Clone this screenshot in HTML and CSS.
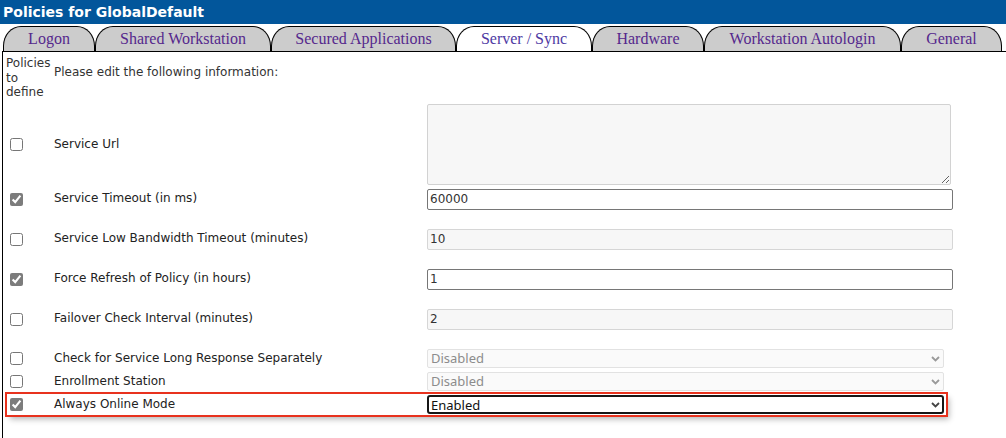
FILE: index.html
```html
<!DOCTYPE html>
<html lang="en">
<head>
<meta charset="utf-8">
<title>Policies for GlobalDefault</title>
<link rel="stylesheet" href="styles.css">
</head>
<body>
<div class="titlebar">Policies for GlobalDefault</div>
<div class="tabs">
  <div class="tab w-logon">Logon</div>
  <div class="tab w-shared">Shared Workstation</div>
  <div class="tab w-secured">Secured Applications</div>
  <div class="tab w-server active">Server / Sync</div>
  <div class="tab w-hardware">Hardware</div>
  <div class="tab w-auto">Workstation Autologin</div>
  <div class="tab w-general">General</div>
</div>
<div class="panel">
  <div class="intro">
    <div class="intro-col">Policies to define</div>
    <div class="intro-text">Please edit the following information:</div>
  </div>

  <div class="row row-area">
    <div class="chk"><input type="checkbox"></div>
    <label class="lbl">Service Url</label>
    <textarea class="area" readonly></textarea>
  </div>

  <div class="row row-input first-input">
    <div class="chk"><input type="checkbox" checked></div>
    <label class="lbl">Service Timeout (in ms)</label>
    <input class="inp" type="text" value="60000">
  </div>

  <div class="row row-input">
    <div class="chk"><input type="checkbox"></div>
    <label class="lbl">Service Low Bandwidth Timeout (minutes)</label>
    <input class="inp off" type="text" value="10" readonly>
  </div>

  <div class="row row-input">
    <div class="chk"><input type="checkbox" checked></div>
    <label class="lbl">Force Refresh of Policy (in hours)</label>
    <input class="inp" type="text" value="1">
  </div>

  <div class="row row-input">
    <div class="chk"><input type="checkbox"></div>
    <label class="lbl">Failover Check Interval (minutes)</label>
    <input class="inp off" type="text" value="2" readonly>
  </div>

  <div class="row row-select first-select">
    <div class="chk"><input type="checkbox"></div>
    <label class="lbl">Check for Service Long Response Separately</label>
    <div class="sel">
      <select class="off" disabled><option>Disabled</option></select>
      <svg class="chev" width="9" height="6" viewBox="0 0 9 6"><path d="M1 1 L4.5 4.5 L8 1" fill="none" stroke="#9a9a9a" stroke-width="1.8"/></svg>
    </div>
  </div>

  <div class="row row-select">
    <div class="chk"><input type="checkbox"></div>
    <label class="lbl">Enrollment Station</label>
    <div class="sel">
      <select class="off" disabled><option>Disabled</option></select>
      <svg class="chev" width="9" height="6" viewBox="0 0 9 6"><path d="M1 1 L4.5 4.5 L8 1" fill="none" stroke="#9a9a9a" stroke-width="1.8"/></svg>
    </div>
  </div>

  <div class="row row-select highlight">
    <div class="chk"><input type="checkbox" checked></div>
    <label class="lbl">Always Online Mode</label>
    <div class="sel">
      <select class="on"><option>Enabled</option><option>Disabled</option></select>
      <svg class="chev" width="9" height="6" viewBox="0 0 9 6"><path d="M1 1 L4.5 4.5 L8 1" fill="none" stroke="#444" stroke-width="1.8"/></svg>
    </div>
  </div>
</div>
</body>
</html>
```
FILE: styles.css
```css
html, body {
  margin: 0;
  padding: 0;
  background: #fff;
}

body {
  font-family: "DejaVu Sans", Verdana, sans-serif;
  font-size: 12px;
  color: #333;
  height: 438px;
  overflow: hidden;
}

.titlebar {
  height: 24px;
  line-height: 24px;
  background: #02569b;
  color: #fff;
  font-weight: bold;
  font-size: 14px;
  padding-left: 3px;
  white-space: nowrap;
}

.tabs {
  display: flex;
  margin-top: 2px;
  padding-left: 3px;
  height: 25px;
}

.tab {
  box-sizing: border-box;
  height: 25px;
  border: 1px solid #000;
  border-bottom: 0;
  border-radius: 18px 18px 0 0 / 20px 20px 0 0;
  background: #cccccc;
  display: flex;
  align-items: center;
  justify-content: center;
  font-family: "Liberation Serif", "Times New Roman", serif;
  font-size: 16px;
  color: #55288c;
  white-space: nowrap;
}

.tab.active {
  background: #fff;
  color: #4d3aa3;
}

.w-logon { width: 92px; }
.w-shared { width: 176px; }
.w-secured { width: 185px; }
.w-server { width: 136px; }
.w-hardware { width: 112px; }
.w-auto { width: 197px; }
.w-general { width: 101px; }

.panel {
  margin-left: 2px;
  border-left: 1px solid #000;
  border-top: 1px solid #000;
  min-height: 400px;
}

.intro {
  display: grid;
  grid-template-columns: 51px auto;
  padding-top: 4px;
  line-height: 14.5px;
}

.intro-col {
  padding-left: 3px;
  color: #333;
}

.intro-text {
  padding-top: 9px;
  color: #333;
}

.row {
  display: grid;
  grid-template-columns: 51px 373px auto;
  align-items: center;
}

.chk {
  display: flex;
  align-items: center;
  height: 13px;
}

.chk input {
  margin: 0 0 0 7px;
  width: 13px;
  height: 13px;
  accent-color: #7c7c7c;
}

.lbl {
  color: #222;
  white-space: nowrap;
  line-height: 14px;
}

.row-area {
  margin-top: 4px;
}

.area {
  display: block;
  box-sizing: border-box;
  width: 524px;
  height: 81px;
  margin: 0;
  border: 1px solid #d2d2d2;
  border-radius: 2px;
  background: #f7f7f7;
  resize: both;
  font-family: "DejaVu Sans", sans-serif;
  font-size: 12px;
}

.row-input {
  margin-top: 19px;
  height: 21px;
}

.row-input.first-input {
  margin-top: 4px;
}

.row-input .lbl {
  padding-bottom: 3px;
}

.inp {
  box-sizing: border-box;
  width: 526px;
  height: 21px;
  margin: 0;
  border: 1px solid #767676;
  border-radius: 2px;
  padding: 0 2px;
  background: #fff;
  font-family: "DejaVu Sans", sans-serif;
  font-size: 12px;
  color: #333;
}

.inp.off {
  border-color: #d6d6d6;
  background: #f7f7f7;
}

.row-select {
  margin-top: 4px;
  height: 19px;
}

.row-select.first-select {
  margin-top: 19px;
}

.sel {
  position: relative;
  width: 517px;
  height: 19px;
}

.sel select {
  appearance: none;
  -webkit-appearance: none;
  box-sizing: border-box;
  width: 100%;
  height: 100%;
  margin: 0;
  padding: 0 0 0 3px;
  font-family: "Noto Sans", "DejaVu Sans", sans-serif;
  font-size: 13px;
  line-height: 17px;
  outline: none;
}

.sel select.off {
  border: 1px solid #e2e2e2;
  border-radius: 2px;
  background: #fafafa;
  color: #8c8c8c;
  opacity: 1;
}

.sel select.on {
  border: 2px solid #161616;
  border-radius: 3px;
  background: #fff;
  color: #111;
  padding-left: 2px;
}

.chev {
  position: absolute;
  right: 4px;
  top: 7px;
  pointer-events: none;
}

.row.highlight {
  margin-top: 3px;
  margin-left: 4px;
  width: 939px;
  height: 21px;
  grid-template-columns: 47px 373px auto;
  box-shadow: 0 0 0 2px #e8321e, 3px 4px 6px rgba(0, 0, 0, 0.3);
}

.row.highlight .chk input {
  margin-left: 3px;
}
```
